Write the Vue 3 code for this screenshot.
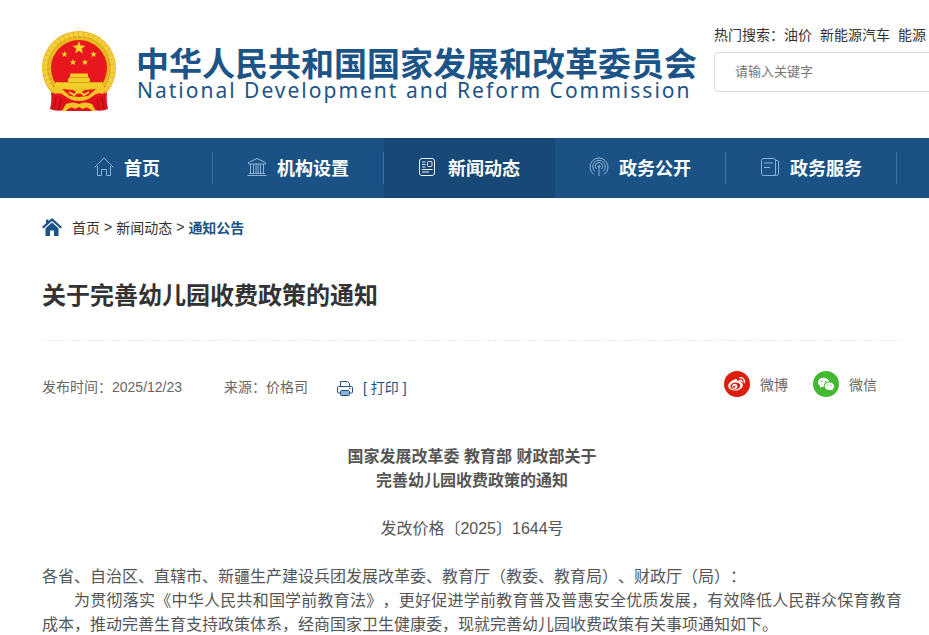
<script setup>
const hotWords = ['油价', '新能源汽车', '能源']
const navItems = [
  { id: 'home', label: '首页' },
  { id: 'org', label: '机构设置' },
  { id: 'news', label: '新闻动态', active: true },
  { id: 'open', label: '政务公开' },
  { id: 'service', label: '政务服务' },
]
</script>

<template>
  <div class="page">
    <header class="header">
      <a class="brand" href="#">
        <svg class="emblem" viewBox="0 0 74 82" aria-hidden="true">
          <circle cx="37" cy="38" r="37" fill="#e9b91f" />
          <circle cx="37" cy="38" r="34" fill="none" stroke="#f3cf42" stroke-width="4" stroke-dasharray="4 1" />
          <circle cx="37" cy="38" r="31" fill="none" stroke="#d9a51a" stroke-width="1" stroke-dasharray="3 2" />
          <circle cx="37" cy="38" r="28" fill="#e8161d" />
          <path d="M11 56L20 58L29 65L45 65L54 58L63 56L62 68L53 75H21L12 68Z" fill="#e8161d" />
          <path fill="#f8d62c" d="M37 11l1.700 4.500 4.800.2-3.800 3 1.300 4.700-4-2.700-4 2.700 1.300-4.700-3.800-3 4.800-.2z" />
          <path fill="#f8d62c" d="M22.500 21l.9 2.200 2.300.1-1.800 1.500.6 2.300-2-1.300-2 1.300.6-2.300-1.800-1.500 2.300-.1zM51.500 21l.9 2.200 2.300.1-1.800 1.500.6 2.300-2-1.300-2 1.300.6-2.300-1.800-1.500 2.300-.1zM31 29l.9 2.200 2.300.1-1.800 1.500.6 2.300-2-1.300-2 1.300.6-2.300-1.800-1.500 2.300-.1zM43 29l.9 2.200 2.300.1-1.800 1.500.6 2.300-2-1.300-2 1.300.6-2.300-1.800-1.500 2.300-.1z" />
          <path d="M28 43.500H46V47L48 49V52H60L62 57H12L14 52H26V49L28 47Z" fill="#f4cf2b" />
          <path d="M27 47.500H47M15 52.500H59" stroke="#d9a01a" />
          <path d="M9 57H65L61 64Q55 62 51 66Q45 71 37 71Q29 71 23 66Q19 62 13 64Z" fill="#f1c827" />
          <path d="M20 59L31 60 37 64 43 60 54 59 46 66 37 67 28 66Z" fill="#e8161d" />
          <path d="M27 62l5 3 5-4 5 4 5-3" fill="none" stroke="#f4cf2b" stroke-width="2" />
          <path d="M9 62Q15 67 22 67L27 72 23 80Q14 82 8 79Q10 72 9 62ZM65 62Q59 67 52 67L47 72 51 80Q60 82 66 79Q64 72 65 62Z" fill="#df121b" />
          <path d="M22 70Q37 77 52 70L51 75Q37 80 23 75Z" fill="#df121b" />
          <path d="M14 68L12 79M19 69L17 80M60 68L62 79M55 69L57 80" stroke="#a80d13" />
          <path d="M24 74Q31 71 37 74Q43 71 50 74L54 81H20Z" fill="#f0c525" />
          <path d="M24 81Q29 75 33 79L37 77L41 79Q45 75 50 81Z" fill="#df121b" />
        </svg>
        <span class="brand-text">
          <span class="brand-cn">中华人民共和国国家发展和改革委员会</span>
          <span class="brand-en" lang="en">National Development and Reform Commission</span>
        </span>
      </a>
      <form class="search" @submit.prevent>
        <p class="hot">热门搜索：<a v-for="w in hotWords" :key="w" href="#">{{ w }}</a></p>
        <input class="search-box" type="text" aria-label="请输入关键字" placeholder="请输入关键字" />
      </form>
    </header>

    <nav class="nav">
      <a v-for="item in navItems" :key="item.id" href="#" class="nav-item" :class="{ active: item.active }">
        <svg class="nav-icon" viewBox="0 0 20 20" aria-hidden="true">
          <path v-if="item.id === 'home'" d="M.5 10.500L10 1l9.500 9.500M3.500 9v9.500h4v-6h5v6h4V9" />
          <g v-else-if="item.id === 'org'">
            <path d="M1.500 5.500L10 1.500l8.500 4v1.500h-17zM.5 18.500h19M2 16.500h16M3.500 7v9.500M6.500 7v9.500M9 7v9.500M11 7v9.500M13.500 7v9.500M16.500 7v9.500" />
          </g>
          <g v-else-if="item.id === 'news'">
            <rect x="1.500" y="1.500" width="15" height="17" rx="2.500" />
            <rect x="9.500" y="4.500" width="4.500" height="5" rx="1" />
            <path d="M4 5h3.500M4 7.500h3.500M4 10h3.500M4 12.500h10.500M4 15h7" />
          </g>
          <g v-else-if="item.id === 'open'">
            <path d="M5 17.500a9 9 0 1 1 10 0M6 14.500a6.300 6.300 0 1 1 8 0M7.500 12a3.700 3.700 0 1 1 5 0M10 9.500v9.500" />
            <circle cx="10" cy="9.500" r="1" />
          </g>
          <g v-else>
            <rect x="1.500" y="1.500" width="14" height="17" rx="2" />
            <path d="M4 6h9M4 10.500h6M15.500 3.500h1.500a1.500 1.500 0 0 1 1.500 1.500v11.500a2 2 0 0 1-2 2h-3" />
          </g>
        </svg>
        <span>{{ item.label }}</span>
      </a>
    </nav>

    <main class="content">
      <div class="crumbs">
        <svg class="crumb-icon" viewBox="0 0 20 18" aria-hidden="true">
          <path d="M10 0L20 9l-1.500 1.500L10 3 1.500 10.500 0 9l4-3.700V1.500h2.500V3.200z" />
          <path d="M3.500 10.200L10 4.500l6.500 5.700V18H12v-5.500H8V18H3.500z" />
        </svg>
        <a href="#">首页</a><span class="sep">&gt;</span><a href="#">新闻动态</a><span class="sep">&gt;</span><a class="current" href="#">通知公告</a>
      </div>

      <h1 class="title">关于完善幼儿园收费政策的通知</h1>

      <div class="meta">
        <div class="meta-left">
          <span>发布时间：2025/12/23</span>
          <span>来源：价格司</span>
          <button class="print" type="button">
            <svg class="print-icon" viewBox="0 0 16 16" aria-hidden="true">
              <path d="M3.500 6.500v-5h7l2 2v3M3.500 13h-2a1 1 0 0 1-1-1V7.500a1 1 0 0 1 1-1h13a1 1 0 0 1 1 1V12a1 1 0 0 1-1 1h-2M12 8.500h1.500" fill="none" stroke="#1b5288" />
              <rect x="3.500" y="10.500" width="9" height="5" rx="1" fill="#8fb0d0" stroke="#1b5288" />
            </svg>
            [ 打印 ]
          </button>
        </div>
        <div class="share">
          <a href="#">
            <svg class="share-icon" viewBox="0 0 26 26" aria-hidden="true">
              <circle cx="13" cy="13" r="13" fill="#dc1e0c" />
              <path fill="#fff" d="M11 8.200c1.500-.5 2.400.2 2 1.800 2.200-.9 4-.3 3.500 1.500 1.500.4 2.500 1.400 2.300 3-.3 2.800-3.700 5.100-7.600 5.100-3.900 0-7-1.900-7-4.600 0-3 3.900-6 6.800-6.800z" />
              <ellipse cx="11.300" cy="15" rx="5" ry="3.500" fill="#dc1e0c" transform="rotate(-8 11.300 15)" />
              <circle cx="10.700" cy="15.300" r="2.600" fill="#fff" />
              <circle cx="10" cy="15.900" r="1.100" fill="#dc1e0c" />
              <circle cx="11.800" cy="14.700" r=".5" fill="#dc1e0c" />
              <path d="M16 9.200c1.500-.2 2.300.8 1.900 2.200M15.600 6.700c3.300-.6 5.500 2 4.600 5" fill="none" stroke="#fff" stroke-width="1.300" stroke-linecap="round" />
            </svg>微博</a>
          <a href="#">
            <svg class="share-icon" viewBox="0 0 26 26" aria-hidden="true">
              <circle cx="13" cy="13" r="13" fill="#43b931" />
              <path fill="#fff" d="M10.700 6.800c3.100 0 5.300 1.900 5.500 4-3.500-.1-6 2-5.400 5.200-.8 0-1.400-.1-2-.3l-2 1.200.5-1.900C5.900 14 5 12.900 5 11.400c0-2.600 2.500-4.600 5.700-4.600z" />
              <path fill="#fff" d="M16.400 11.400c2.700 0 4.700 1.700 4.700 3.900 0 1.200-.7 2.200-1.700 2.900l.4 1.500-1.600-.9c-.6.200-1.200.3-1.800.3-2.700 0-4.700-1.700-4.700-3.800 0-2.200 2-3.900 4.700-3.900z" />
              <g fill="#43b931"><circle cx="8.800" cy="10.200" r=".8" /><circle cx="12.600" cy="10.200" r=".8" /><circle cx="14.800" cy="14.100" r=".7" /><circle cx="18" cy="14.100" r=".7" /></g>
            </svg>微信</a>
        </div>
      </div>

      <article class="article">
        <h2>国家发展改革委 教育部 财政部关于<br />完善幼儿园收费政策的通知</h2>
        <p class="doc-no">发改价格〔2025〕1644号</p>
        <p>各省、自治区、直辖市、新疆生产建设兵团发展改革委、教育厅（教委、教育局）、财政厅（局）：</p>
        <p class="indent">为贯彻落实《中华人民共和国学前教育法》，更好促进学前教育普及普惠安全优质发展，有效降低人民群众保育教育成本，推动完善生育支持政策体系，经商国家卫生健康委，现就完善幼儿园收费政策有关事项通知如下。</p>
      </article>
    </main>
  </div>
</template>

<style>
html {
  scrollbar-width: none;
}
body {
  margin: 0;
  background: #fff;
}
</style>

<style scoped>
.page {
  font-family: "Liberation Sans", "Noto Sans CJK SC", sans-serif;
  font-size: 14px;
  color: #333;
  text-spacing-trim: space-all;
}
a {
  color: inherit;
  text-decoration: none;
}
p, h1, h2 {
  margin: 0;
}
.header {
  display: flex;
  gap: 17px;
  min-height: 138px;
  padding-left: 42px;
  box-sizing: border-box;
  overflow: hidden;
}
.brand {
  display: flex;
  flex: none;
  align-items: flex-start;
  gap: 20px;
  padding-top: 30px;
  color: #1d5488;
}
.emblem {
  width: 74px;
  height: 82px;
}
.brand-text {
  display: flex;
  flex-direction: column;
  padding-top: 17px;
  white-space: nowrap;
}
.brand-cn {
  font-size: 33px;
  line-height: 36px;
  font-weight: 700;
}
.brand-en {
  padding-left: 1px;
  font-family: "Noto Sans", sans-serif;
  font-size: 21px;
  line-height: 14px;
  letter-spacing: 2px;
}
.search {
  flex: 0 0 300px;
  padding-top: 24px;
}
.hot {
  line-height: 22px;
  white-space: nowrap;
}
.hot a + a {
  margin-left: 8px;
}
.search-box {
  width: 100%;
  height: 40px;
  margin-top: 6px;
  padding: 0 20px 2px;
  box-sizing: border-box;
  border: 1px solid #d9d9d9;
  border-radius: 4px;
  background: #fff;
  font: inherit;
  font-size: 13px;
  color: #333;
}
.search-box::placeholder {
  color: #777;
}
.nav {
  display: flex;
  height: 60px;
  padding-left: 42px;
  overflow: hidden;
  background: #1b5285;
}
.nav-item {
  display: flex;
  flex: 0 0 171px;
  align-items: center;
  justify-content: center;
  gap: 10px;
  padding: 0 1px 2px 0;
  box-sizing: border-box;
  font-size: 18px;
  font-weight: 700;
  color: #fff;
  background: linear-gradient(#45739f, #45739f) right center / 1px 32px no-repeat;
}
.nav-item.active {
  background: #174876;
}
.nav-icon {
  width: 20px;
  height: 20px;
  fill: none;
  stroke: #8db2d6;
  stroke-width: 1;
}
.active .nav-icon {
  stroke: #e8f1fa;
}
.content {
  padding: 0 27px 0 42px;
}
.crumbs {
  display: flex;
  align-items: center;
  height: 58px;
}
.crumb-icon {
  width: 20px;
  height: 18px;
  margin-right: 10px;
  fill: #1b5288;
}
.sep {
  margin: 0 4px;
}
.current {
  font-weight: 700;
  color: #1b5288;
}
.title {
  padding: 22px 0 26px;
  border-bottom: 1px dashed #e8e8e8;
  font-size: 24px;
  line-height: 36px;
}
.meta {
  display: flex;
  align-items: flex-start;
  justify-content: space-between;
  padding: 30px 25px 0 0;
  color: #666;
}
.meta-left {
  display: flex;
  gap: 42px;
  padding-top: 4px;
  line-height: 24px;
}
.print {
  display: flex;
  align-items: center;
  gap: 10px;
  margin-left: -13px;
  padding: 2px 0 0;
  border: 0;
  background: none;
  font: inherit;
  line-height: 22px;
  color: #1b5288;
}
.print-icon {
  width: 16px;
  height: 16px;
}
.share {
  display: flex;
  gap: 25px;
}
.share a {
  display: flex;
  align-items: center;
  gap: 10px;
}
.share-icon {
  width: 26px;
  height: 26px;
}
.article {
  margin-top: 46px;
  font-size: 16px;
  line-height: 24px;
  color: #555;
  text-align: justify;
}
.article h2 {
  font-size: 16px;
  line-height: 24px;
  text-align: center;
}
.doc-no {
  margin: 24px 0;
  text-align: center;
}
.indent {
  text-indent: 2em;
}
</style>
